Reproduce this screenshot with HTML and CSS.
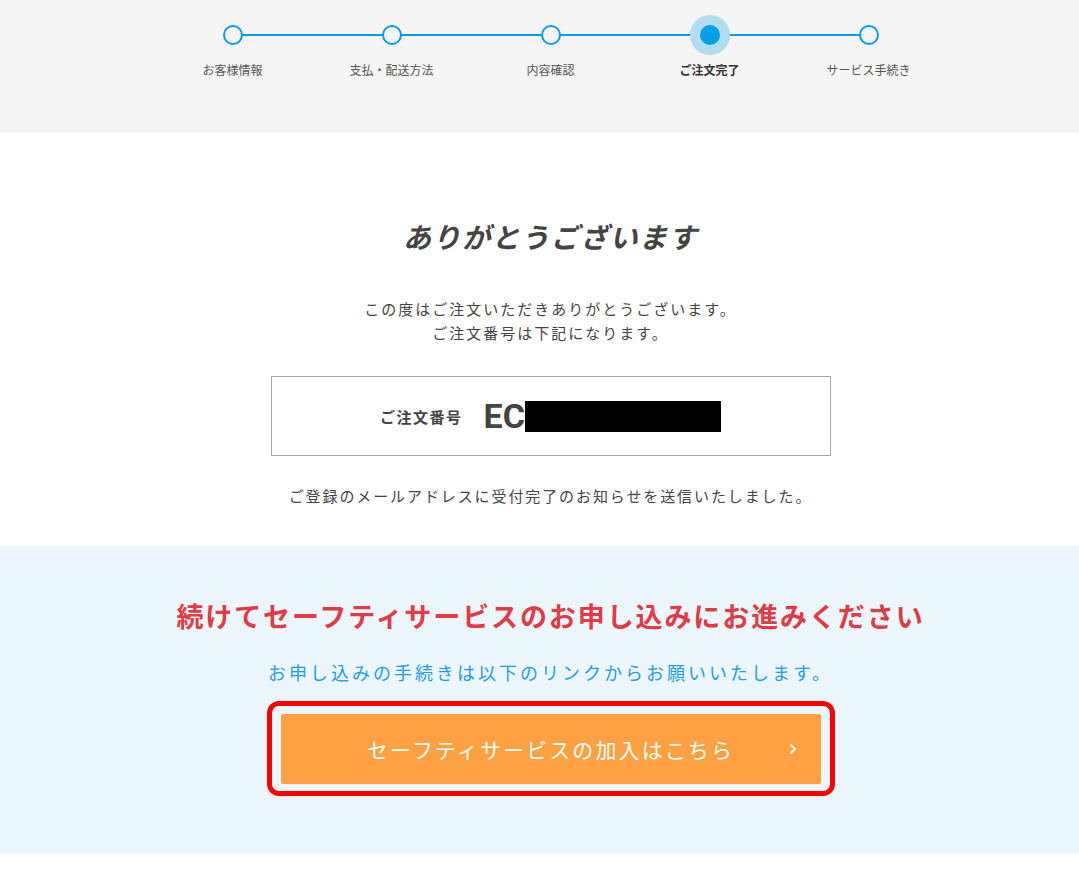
FILE: index.html
```html
<!DOCTYPE html>
<html lang="ja">
<head>
<meta charset="utf-8">
<title>ご注文完了</title>
<link rel="stylesheet" href="styles.css">
</head>
<body>
<div class="band band-gray">
  <div class="inner">
    <ol class="stepper">
      <li class="step"><span class="marker"><span class="dot"></span></span><span class="label">お客様情報</span></li>
      <li class="step"><span class="marker"><span class="dot"></span></span><span class="label">支払・配送方法</span></li>
      <li class="step"><span class="marker"><span class="dot"></span></span><span class="label">内容確認</span></li>
      <li class="step step-active"><span class="marker"><span class="dot"></span></span><span class="label">ご注文完了</span></li>
      <li class="step"><span class="marker"><span class="dot"></span></span><span class="label">サービス手続き</span></li>
    </ol>
  </div>
</div>

<div class="band band-white">
  <div class="inner center">
    <h1 class="thanks">ありがとうございます</h1>
    <p class="lead">この度はご注文いただきありがとうございます。<br>ご注文番号は下記になります。</p>
    <div class="order-box">
      <span class="order-label">ご注文番号</span>
      <span class="order-no">EC</span>
      <span class="redact"></span>
    </div>
    <p class="mail-note">ご登録のメールアドレスに受付完了のお知らせを送信いたしました。</p>
  </div>
</div>

<div class="band band-blue">
  <div class="inner center">
    <h2 class="next-title">続けてセーフティサービスのお申し込みにお進みください</h2>
    <p class="next-sub">お申し込みの手続きは以下のリンクからお願いいたします。</p>
    <div class="highlight">
      <a class="cta" href="#">
        <span class="cta-space"></span>
        <span class="cta-text">セーフティサービスの加入はこちら</span>
        <span class="cta-arrow"><svg width="8" height="12" viewBox="0 0 8 12"><polyline points="2,2 6,6 2,10" fill="none" stroke="#fff" stroke-width="1.8" stroke-linecap="round" stroke-linejoin="round"/></svg></span>
      </a>
    </div>
  </div>
</div>
<div class="footer-space"></div>
</body>
</html>
```

FILE: styles.css
```css
* { box-sizing: border-box; }
html, body { margin: 0; padding: 0; }
body {
  font-family: "Noto Sans CJK JP", "Noto Sans", sans-serif;
  color: #444;
  background: #fff;
}
.band { width: 100%; }
.inner {
  width: 100%;
  padding-left: 22px;
}
.center { display: flex; flex-direction: column; align-items: center; }

/* stepper */
.band-gray { background: #f5f5f5; height: 133px; }
.stepper {
  list-style: none;
  margin: 0 auto;
  padding: 15px 0 0;
  width: 795px;
  display: grid;
  grid-template-columns: repeat(5, 159px);
  position: relative;
}
.stepper::before {
  content: "";
  position: absolute;
  left: 80px;
  right: 80px;
  top: 34px;
  height: 2px;
  background: #00a0e9;
}
.step {
  display: flex;
  flex-direction: column;
  align-items: center;
  position: relative;
}
.marker {
  width: 40px;
  height: 40px;
  display: flex;
  align-items: center;
  justify-content: center;
  border-radius: 50%;
}
.dot {
  width: 20px;
  height: 20px;
  border-radius: 50%;
  border: 2px solid #00a0e9;
  background: #f5f5f5;
}
.step-active .marker { background: #b1dcf2; }
.step-active .dot { background: #00a0e9; }
.label {
  margin-top: 6px;
  font-size: 12px;
  line-height: 18px;
  color: #555;
  white-space: nowrap;
}
.step-active .label { font-weight: 700; color: #333; }

/* thanks */
.band-white { padding: 83px 0 38px; }
.thanks {
  margin: 0;
  font-size: 28px;
  line-height: 40px;
  font-weight: 700;
  font-style: italic;
  letter-spacing: 1.5px;
  color: #444;
}
.lead {
  margin: 41px 0 0;
  font-size: 15px;
  line-height: 24px;
  letter-spacing: 2px;
  text-align: center;
  color: #444;
}
.order-box {
  margin-top: 31px;
  width: 560px;
  height: 80px;
  border: 1px solid #aaa;
  display: flex;
  align-items: center;
  justify-content: center;
}
.order-label {
  font-size: 15px;
  font-weight: 700;
  letter-spacing: 1.5px;
  color: #444;
}
.order-no {
  margin-left: 21px;
  font-family: Roboto, "Liberation Sans", sans-serif;
  font-weight: 700;
  font-size: 34px;
  line-height: 40px;
  color: #444;
}
.redact {
  width: 196px;
  height: 31px;
  background: #000;
}
.mail-note {
  margin: 28px 0 0;
  font-size: 15px;
  line-height: 24px;
  letter-spacing: 1.9px;
  color: #444;
}

/* next */
.band-blue { background: #ecf7fd; padding: 52px 0 57px; }
.next-title {
  margin: 0;
  font-size: 27px;
  line-height: 36px;
  font-weight: 700;
  letter-spacing: 1.9px;
  color: #e23a46;
}
.next-sub {
  margin: 24px 0 0;
  font-size: 18px;
  line-height: 28px;
  letter-spacing: 3px;
  color: #1b9ee2;
}
.highlight {
  margin-top: 15px;
  width: 568px;
  height: 95px;
  border: 5px solid #ff0000;
  border-radius: 12px;
  padding: 8px 9px 7px 9px;
}
.cta {
  display: grid;
  grid-template-columns: 1fr auto 1fr;
  align-items: center;
  width: 540px;
  height: 70px;
  background: #ffa042;
  border-radius: 2px;
  text-decoration: none;
  color: #fff;
}
.cta-text {
  font-size: 21px;
  letter-spacing: 2.1px;
  line-height: 30px;
}
.cta-arrow {
  justify-self: end;
  padding-right: 24px;
  display: flex;
}
.footer-space { height: 21px; background: #fff; }
```
